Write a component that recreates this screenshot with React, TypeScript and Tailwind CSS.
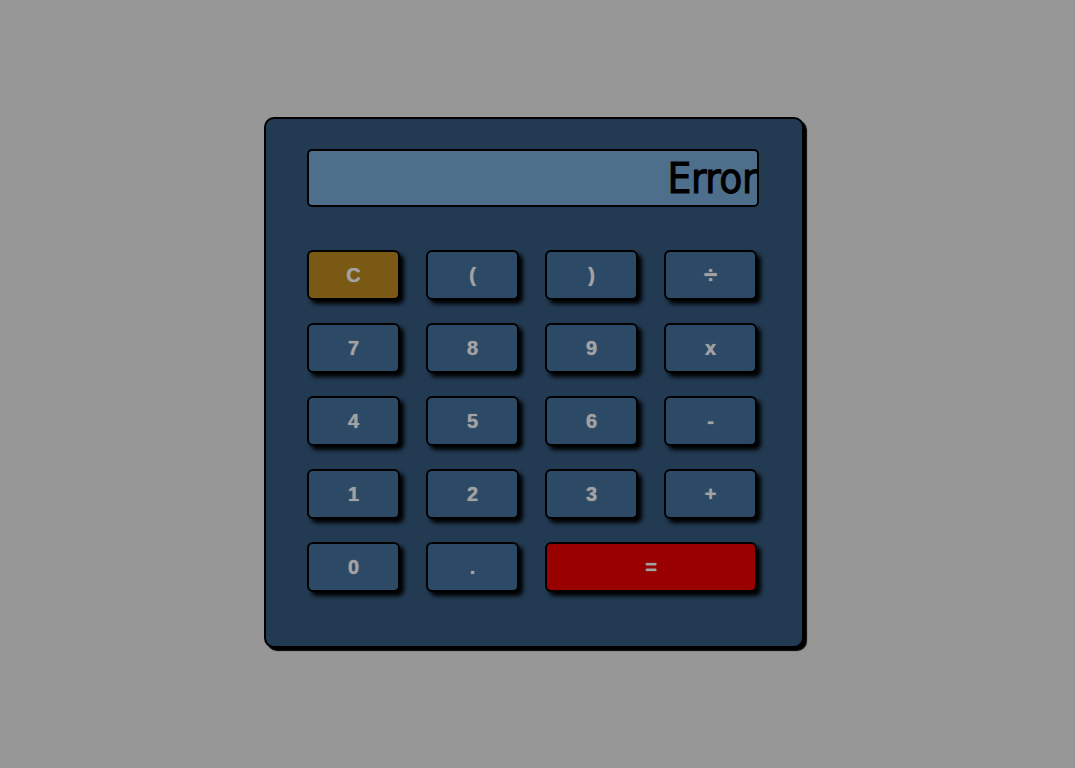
import React from "react";

const keys: { label: string; tone?: "clear" | "equals" }[] = [
  { label: "C", tone: "clear" },
  { label: "(" },
  { label: ")" },
  { label: "÷" },
  { label: "7" },
  { label: "8" },
  { label: "9" },
  { label: "x" },
  { label: "4" },
  { label: "5" },
  { label: "6" },
  { label: "-" },
  { label: "1" },
  { label: "2" },
  { label: "3" },
  { label: "+" },
  { label: "0" },
  { label: "." },
  { label: "=", tone: "equals" },
];

export default function App() {
  return (
    <div className="w-screen h-screen bg-[#979797] pl-[264px] pt-[117px]">
      <div className="w-[540px] h-[531px] bg-[#223a52] border-2 border-black rounded-[10px] shadow-[3px_3px_1px_#000] pl-[41px] pr-[43px] pt-[30px]">
        {/* display */}
        <div className="h-[58px] bg-[#4e6f8c] border-2 border-black rounded-[5px] flex items-center justify-end overflow-hidden">
          <span className="text-[42px] leading-none text-black font-['DejaVu_Sans_Condensed','DejaVu_Sans',sans-serif] tracking-[-0.5px] [-webkit-text-stroke:1px_black] mt-[2px]">
            Error
          </span>
        </div>

        <div className="grid grid-cols-[93px_93px_93px_93px] gap-x-[26px] gap-y-[23px] mt-[43px]">
          {keys.map((k) => (
            <button
              key={k.label}
              className={
                "h-[50px] border-2 border-black rounded-[6px] shadow-[4px_4px_4px_#000] font-bold text-[#a2a2a2] font-['Liberation_Sans',Arial,sans-serif] flex items-center justify-center [text-shadow:0_0_1px_#a2a2a2] " +
                (k.label === "÷" ? "text-[24px] " : "text-[20px] ") +
                (k.tone === "clear"
                  ? "bg-[#7a5914]"
                  : k.tone === "equals"
                  ? "bg-[#990000] col-span-2"
                  : "bg-[#2c4a66]")
              }
            >
              {k.label}
            </button>
          ))}
        </div>
      </div>
    </div>
  );
}
